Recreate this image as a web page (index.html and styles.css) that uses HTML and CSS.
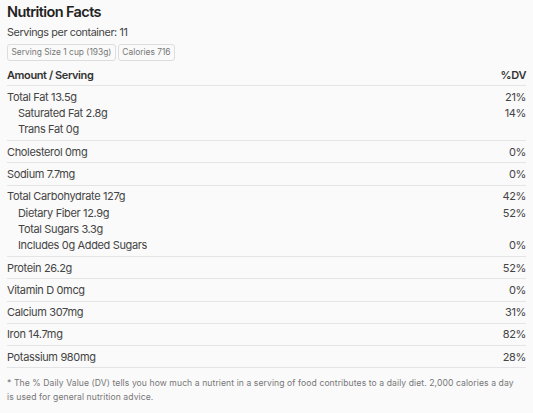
FILE: index.html
```html
<!DOCTYPE html>
<html>
<head>
<meta charset="utf-8">
<link rel="stylesheet" href="styles.css">
</head>
<body>
<div class="panel">
  <h1 class="title">Nutrition Facts</h1>
  <div class="servings">Servings per container: 11</div>
  <div class="pills">
    <span class="pill">Serving Size 1 cup (193g)</span>
    <span class="pill">Calories 716</span>
  </div>
  <div class="head"><span>Amount / Serving</span><span>%DV</span></div>
  <div class="group multi">
    <div class="line"><span>Total Fat 13.5g</span><span>21%</span></div>
    <div class="line sub"><span>Saturated Fat 2.8g</span><span>14%</span></div>
    <div class="line sub"><span>Trans Fat 0g</span><span></span></div>
  </div>
  <div class="group">
    <div class="line"><span>Cholesterol 0mg</span><span>0%</span></div>
  </div>
  <div class="group">
    <div class="line"><span>Sodium 7.7mg</span><span>0%</span></div>
  </div>
  <div class="group multi">
    <div class="line"><span>Total Carbohydrate 127g</span><span>42%</span></div>
    <div class="line sub"><span>Dietary Fiber 12.9g</span><span>52%</span></div>
    <div class="line sub"><span>Total Sugars 3.3g</span><span></span></div>
    <div class="line sub"><span>Includes 0g Added Sugars</span><span>0%</span></div>
  </div>
  <div class="group">
    <div class="line"><span>Protein 26.2g</span><span>52%</span></div>
  </div>
  <div class="group">
    <div class="line"><span>Vitamin D 0mcg</span><span>0%</span></div>
  </div>
  <div class="group">
    <div class="line"><span>Calcium 307mg</span><span>31%</span></div>
  </div>
  <div class="group">
    <div class="line"><span>Iron 14.7mg</span><span>82%</span></div>
  </div>
  <div class="group">
    <div class="line"><span>Potassium 980mg</span><span>28%</span></div>
  </div>
  <p class="note">* The % Daily Value (DV) tells you how much a nutrient in a serving of food contributes to a daily diet. 2,000 calories a day is used for general nutrition advice.</p>
</div>
</body>
</html>
```
FILE: styles.css
```css
html, body {
  margin: 0;
  padding: 0;
  background: #fafafa;
}
body {
  font-family: Inter, "Liberation Sans", sans-serif;
  color: #333;
}
.panel {
  padding: 2px 7px 0 7px;
}
.title {
  margin: 0;
  font-size: 14.5px;
  font-weight: 600;
  letter-spacing: -0.6px;
  line-height: 20px;
  color: #222;
}
.servings {
  margin-top: 3px;
  font-size: 10.8px;
  letter-spacing: -0.4px;
  line-height: 16px;
  color: #444;
}
.pills {
  display: flex;
  gap: 2px;
  margin-top: 3px;
}
.pill {
  font-size: 8.4px;
  line-height: 15px;
  padding: 0 3.5px;
  border: 1px solid #ddd;
  border-radius: 3px;
  color: #777;
  background: #fafafa;
}
.head {
  display: flex;
  justify-content: space-between;
  margin-top: 6px;
  font-size: 11px;
  font-weight: 600;
  letter-spacing: -0.4px;
  line-height: 16px;
  color: #333;
  padding-bottom: 2px;
  border-bottom: 1px solid #e4e4e4;
}
.group {
  padding: 2.6px 0;
  border-bottom: 1px solid #e4e4e4;
}
.group.multi {
  padding: 2.5px 0;
}
.line {
  display: flex;
  justify-content: space-between;
  font-size: 11px;
  letter-spacing: -0.35px;
  line-height: 16px;
  color: #444;
}
.group.multi .line {
  line-height: 16.4px;
}
.line.sub {
  padding-left: 11px;
}
.note {
  margin: 8px 8px 0 0;
  font-size: 8.6px;
  letter-spacing: 0.08px;
  line-height: 14px;
  color: #777;
}
```
